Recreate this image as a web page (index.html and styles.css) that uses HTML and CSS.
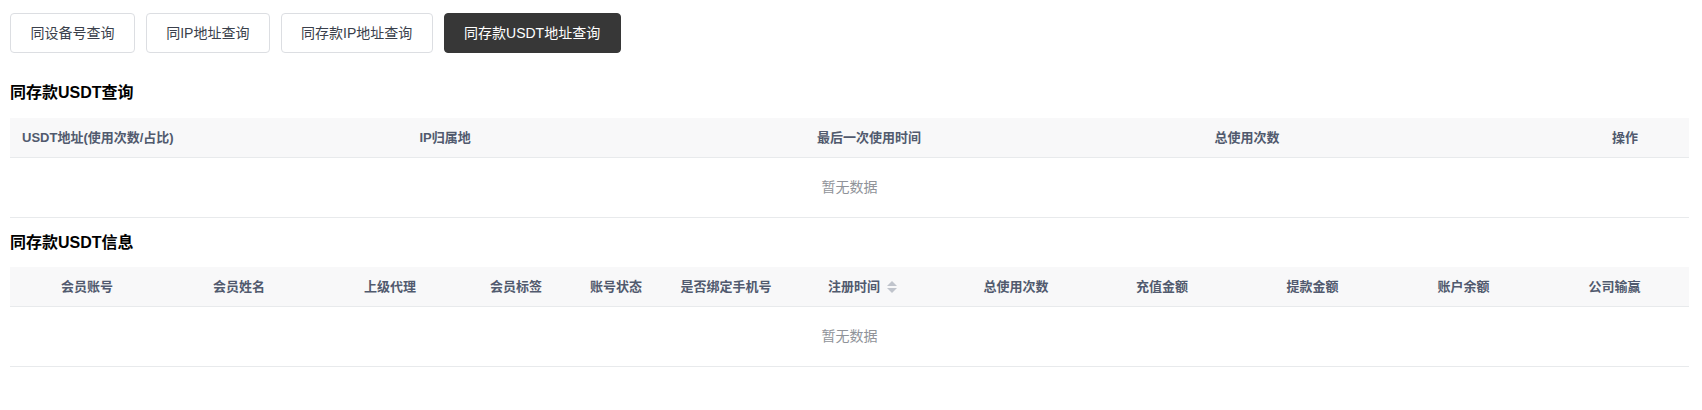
FILE: index.html
```html
<!DOCTYPE html>
<html lang="zh-CN">
<head>
<meta charset="utf-8">
<title>同存款USDT地址查询</title>
<link rel="stylesheet" href="styles.css">
</head>
<body>
<div class="toolbar">
  <button class="btn">同设备号查询</button>
  <button class="btn">同IP地址查询</button>
  <button class="btn">同存款IP地址查询</button>
  <button class="btn btn-active">同存款USDT地址查询</button>
</div>

<section class="panel panel-first">
  <h3 class="panel-title">同存款USDT查询</h3>
  <div class="table">
    <div class="thead cols-query">
      <div class="th">USDT地址(使用次数/占比)</div>
      <div class="th">IP归属地</div>
      <div class="th">最后一次使用时间</div>
      <div class="th">总使用次数</div>
      <div class="th">操作</div>
    </div>
    <div class="empty">暂无数据</div>
  </div>
</section>

<section class="panel panel-next">
  <h3 class="panel-title">同存款USDT信息</h3>
  <div class="table">
    <div class="thead cols-info">
      <div class="th th-center">会员账号</div>
      <div class="th th-center">会员姓名</div>
      <div class="th th-center">上级代理</div>
      <div class="th th-center">会员标签</div>
      <div class="th th-center">账号状态</div>
      <div class="th th-center">是否绑定手机号</div>
      <div class="th th-center">注册时间<span class="caret"><svg width="10" height="12" viewBox="0 0 10 12"><path d="M0 5 L5 0 L10 5 Z" fill="#c0c4cc"/><path d="M0 7 L5 12 L10 7 Z" fill="#c0c4cc"/></svg></span></div>
      <div class="th th-center">总使用次数</div>
      <div class="th th-center">充值金额</div>
      <div class="th th-center">提款金额</div>
      <div class="th th-center">账户余额</div>
      <div class="th th-center">公司输赢</div>
    </div>
    <div class="empty">暂无数据</div>
  </div>
</section>
</body>
</html>
```

FILE: styles.css
```css
* { box-sizing: border-box; }

html, body {
  margin: 0;
  background: #ffffff;
}

body {
  padding: 13px 13px 0 10px;
  font-family: "Liberation Sans", "Noto Sans CJK SC", sans-serif;
  color: #515a6e;
}

.toolbar {
  display: flex;
  gap: 10.7px;
  height: 40px;
}

.btn {
  height: 40px;
  padding: 0 19.5px;
  border: 1px solid #dcdee2;
  border-radius: 4px;
  background: #ffffff;
  color: #3a3f4b;
  font-family: "Liberation Sans", "Noto Sans CJK SC", sans-serif;
  font-size: 14px;
  line-height: 38px;
  white-space: nowrap;
  cursor: pointer;
}

.btn-active {
  background: #373737;
  border-color: #373737;
  color: #ffffff;
}

.panel-first { margin-top: 28px; }
.panel-next { margin-top: 13.5px; }

.panel-title {
  margin: 0 0 12.5px;
  height: 24px;
  line-height: 24px;
  font-size: 16px;
  font-weight: bold;
  color: #000000;
}

.panel-next .panel-title { margin-bottom: 12px; }

.table {
  width: 1679px;
}

.thead {
  display: grid;
  height: 40px;
  background: #f8f8f9;
  border-bottom: 1px solid #e8eaec;
}

.cols-query {
  grid-template-columns: 397.5px 397.5px 397.5px 397.5px 89px;
}

.cols-info {
  grid-template-columns: 154px 150px 152px 100px 100px 120px 160px 140px 152px 149px 153px 149px;
}

.th {
  display: flex;
  align-items: center;
  padding: 0 12px;
  font-size: 13px;
  font-weight: bold;
  color: #515a6e;
  white-space: nowrap;
  line-height: 39px;
}

.th-center {
  justify-content: center;
  padding: 0;
}

.caret {
  display: inline-flex;
  align-items: center;
  width: 24px;
  height: 34px;
  padding-left: 7px;
}

.empty {
  height: 60px;
  line-height: 59px;
  text-align: center;
  font-size: 14px;
  color: #909399;
  border-bottom: 1px solid #e8eaec;
}
```
